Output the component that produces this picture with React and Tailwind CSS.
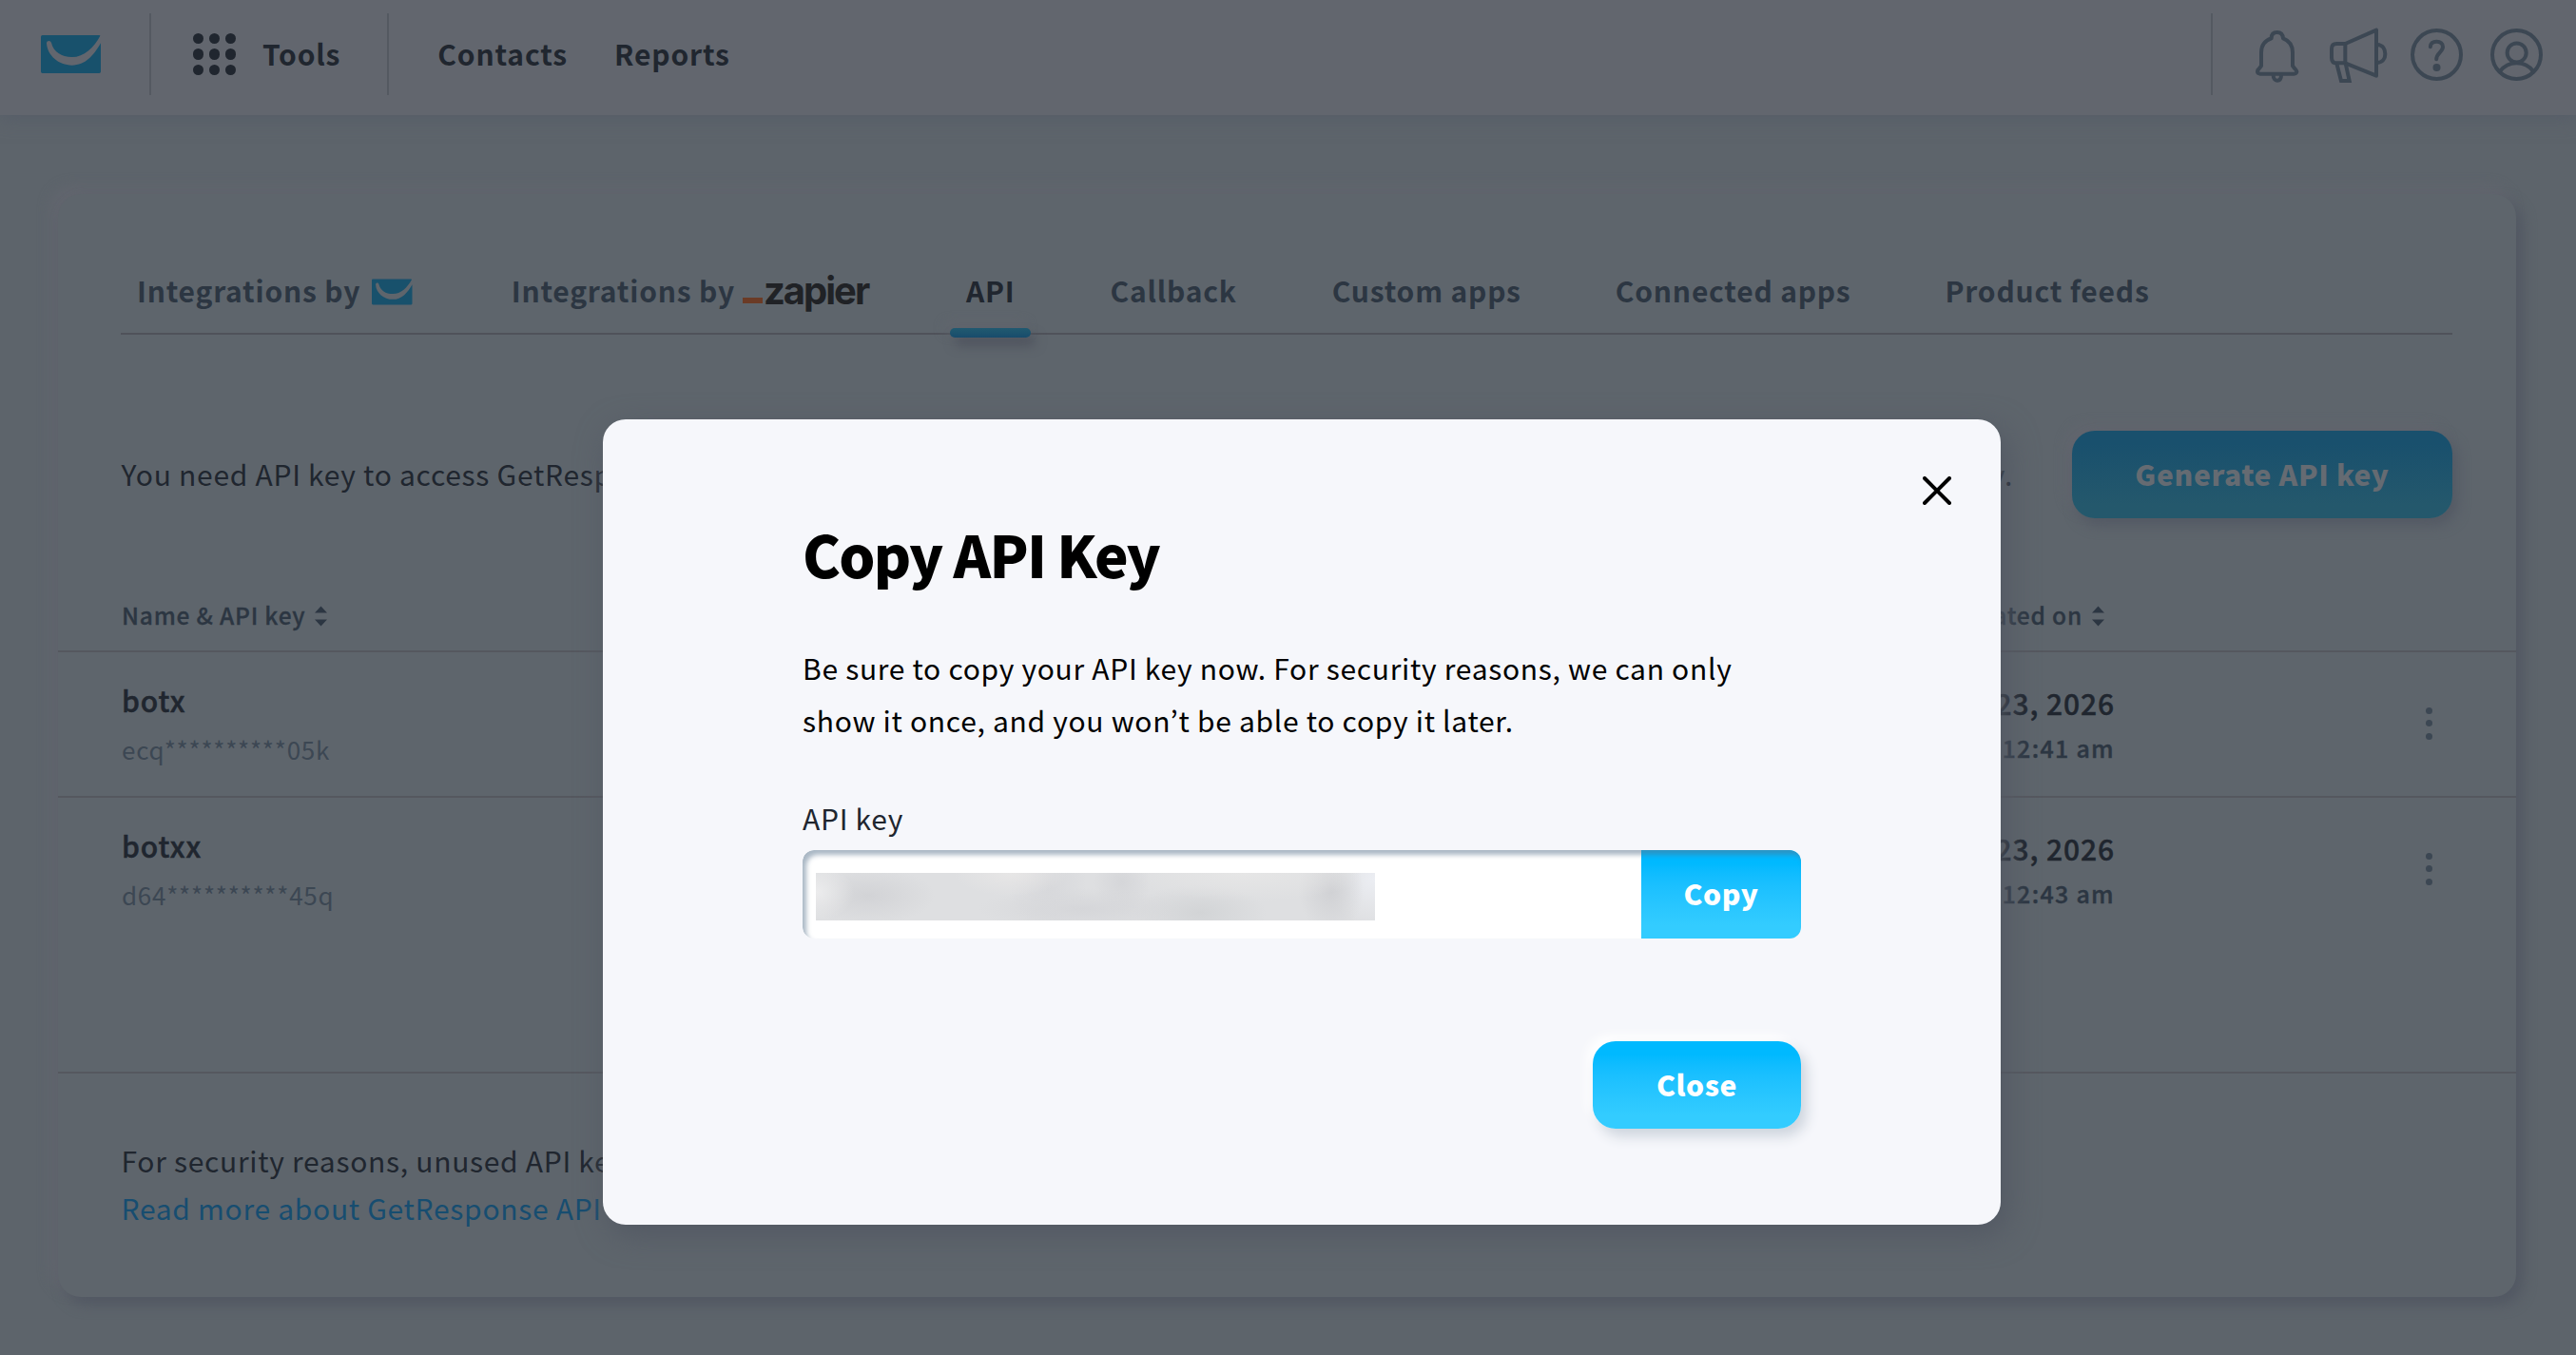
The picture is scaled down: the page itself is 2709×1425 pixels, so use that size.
const ROWS = [
  { name: "botx", key: "ecq**********05k", date: "Jan 23, 2026", time: "12:41 am" },
  { name: "botxx", key: "d64**********45q", date: "Jan 23, 2026", time: "12:43 am" },
];

function Logo({ className }) {
  return (
    <svg viewBox="39 51 189 120" className={className}>
      <path
        fill="#18516c"
        d="M44 51 H223 Q226 51 226 53 C206 90 175 120 137 120 C104 120 79 104 72 75 C70 66 57 67 57 76 C59 115 95 146 137 146 C180 146 205 115 228 76 V166 Q228 171 223 171 H44 Q39 171 39 166 V56 Q39 51 44 51 Z"
      />
    </svg>
  );
}

function HeaderDivider({ className }) {
  return <div className={`h-[86px] w-0.5 shrink-0 bg-[#545961] ${className}`} />;
}

function BellIcon() {
  return (
    <svg viewBox="63 42 144 180" className="h-[60px] w-12" fill="none" stroke="#3c4753" strokeWidth="12" strokeLinejoin="round">
      <path d="M81 188 Q72 187 72 181 Q72 176 76 173 L84 163 V121 C84 97 97 82 116 76 C116 64 122 57 134 57 C146 57 152 64 153 76 C172 83 183 97 183 121 V163 L191 173 Q196 178 196 181 Q195 188 187 188 Z" />
      <path d="M122 192 C122 204 128 209 134 209 C141 209 147 204 147 192" />
    </svg>
  );
}

function MegaphoneIcon() {
  return (
    <svg viewBox="297 36 189 183" className="h-[61px] w-[63px]" fill="none" stroke="#3c4753" strokeWidth="12" strokeLinejoin="round">
      <path d="M349 90 H322 Q306 90 306 106 V134 Q306 151 322 151 H349 Z" />
      <path d="M349 90 L447 47 V191 L349 151" />
      <path d="M450 93 C468 94 475 108 475 122 C475 137 467 149 450 150" />
      <path d="M322 152 L336 207 H362 L350 152" strokeLinejoin="miter" />
    </svg>
  );
}

function HelpIcon() {
  return (
    <svg viewBox="555.5 45 165 165" className="size-[55px]" fill="none" stroke="#3c4753" strokeWidth="12">
      <circle cx="638" cy="127.5" r="76.5" />
      <path d="M618 103 C618 92 626 86 637.500 86 C650 86 657.500 93 657.500 103 C657.500 119 637 122 637 142" strokeLinecap="round" />
      <circle cx="638" cy="168" r="12" fill="#3c4753" stroke="none" />
    </svg>
  );
}

function UserIcon() {
  return (
    <svg viewBox="807 45 165 165" className="size-[55px]" fill="none" stroke="#3c4753" strokeWidth="12">
      <circle cx="889.5" cy="127.5" r="76.5" />
      <circle cx="890" cy="121.500" r="30" />
      <path d="M837 180 C850 163 868 153.500 889.500 153.500 C912 153.500 930 163 942 180" />
    </svg>
  );
}

function SortIcon({ className }) {
  return (
    <svg viewBox="0 0 13 22" className={`h-[22px] w-[13px] ${className}`} fill="#2c3642">
      <path d="M6.500 0.500 L13 7.500 H0 Z M6.500 21.500 L13 14.500 H0 Z" />
    </svg>
  );
}

function Header() {
  return (
    <header className="relative h-[121px] bg-[#62666e] shadow-[0_3px_18px_#565d68]">
      <div className="flex h-[114px] items-center text-[30px] font-bold tracking-[0.85px] text-[#20262f]">
        <Logo className="ml-[43px] h-10 w-[63px]" />
        <HeaderDivider className="ml-[51px]" />
        <div className="ml-11 grid grid-cols-3 gap-[5.5px]">
          {Array.from({ length: 9 }, (_, i) => (
            <i key={i} className="size-[11.3px] rounded-full bg-[#20262f]" />
          ))}
        </div>
        <span className="-mt-0.5 ml-7">Tools</span>
        <HeaderDivider className="ml-[49px]" />
        <span className="-mt-0.5 ml-[51px]">Contacts</span>
        <span className="-mt-0.5 ml-[49px]">Reports</span>
        <HeaderDivider className="mr-[44.5px] ml-auto" />
        <div className="mr-[35px] flex items-center">
          <div className="mt-[4px] mr-[30px]"><BellIcon /></div>
          <div className="mt-0.5 mr-[23px]"><MegaphoneIcon /></div>
          <div className="mr-[29px]"><HelpIcon /></div>
          <UserIcon />
        </div>
      </div>
    </header>
  );
}

function Tab({ children, active, className = "" }) {
  return (
    <div className={`relative flex h-[67px] px-[17px] leading-[44px] ${active ? "text-[#20262f]" : ""} ${className}`}>
      {children}
      {active && (
        <div className="absolute inset-x-0 -bottom-[5px] h-2.5 rounded-[5px] bg-linear-to-b from-[#215a70] to-[#184c6c] shadow-[5px_8px_12px_#4d515c,-5px_-5px_12px_#62666e]" />
      )}
    </div>
  );
}

function Tabs() {
  return (
    <nav className="mr-[67px] ml-[66px] flex gap-[65px] border-b-2 border-[#4f525a] pt-[79px] text-[30px] font-bold tracking-[0.8px] whitespace-nowrap text-[#2c3642]">
      <Tab>
        Integrations by
        <Logo className="mt-2.5 mr-[5px] ml-3 h-7 w-[42.5px]" />
      </Tab>
      <Tab>
        Integrations by
        <span className="mt-[30px] ml-2 h-[5.5px] w-[21px] bg-[#6b3b26]" />
        <span className="mt-px w-[115px] pl-px font-['Inter',sans-serif] text-[40px] font-bold tracking-[-2px] text-[#202226]">zapier</span>
      </Tab>
      <Tab active>API</Tab>
      <Tab className="ml-px">Callback</Tab>
      <Tab className="ml-px">Custom apps</Tab>
      <Tab>Connected apps</Tab>
      <Tab>Product feeds</Tab>
    </nav>
  );
}

function Kebab() {
  return (
    <div className="flex flex-col gap-[6.4px]">
      <i className="size-[7px] rounded-full bg-[#3c4753]" />
      <i className="size-[7px] rounded-full bg-[#3c4753]" />
      <i className="size-[7px] rounded-full bg-[#3c4753]" />
    </div>
  );
}

function KeyRow({ row }) {
  return (
    <div className="flex h-[151px] justify-between pl-[67px]">
      <div className="pt-6 leading-[52px]">
        <div className="text-[30px] font-medium tracking-[0.9px] text-[#20262f] [-webkit-text-stroke:0.5px]">{row.name}</div>
        <div className="text-[26px] tracking-[0.75px] text-[#3c4753]">{row.key}</div>
      </div>
      <div className="flex">
        <div className="pt-[30px] text-right leading-[47px] font-medium [-webkit-text-stroke:0.4px]">
          <div className="text-[30px] tracking-[0.9px] text-[#20262f]">{row.date}</div>
          <div className="text-[25px] tracking-[1.3px] text-[#2c3642]">{row.time}</div>
        </div>
        <div className="flex w-[422px] justify-end pt-[58px] pr-[88.5px]">
          <Kebab />
        </div>
      </div>
    </div>
  );
}

function ApiCard() {
  return (
    <main className="mt-[83px] mr-[63px] ml-[61px] h-[1160px] rounded-3xl bg-[#5e656c] shadow-[7px_8px_14px_#525863,-7px_-7px_14px_#63666f]">
      <Tabs />
      <div className="mr-[67px] ml-[66.500px] mt-[101px] flex h-[92px] items-center text-[30px]">
        <span className="-mt-[2px] tracking-[0.72px] text-[#20262f]">You need API key to access GetResponse</span>
        <span className="-mt-[2px] mr-[62px] ml-auto tracking-[0.72px] text-[#20262f]">regularly.</span>
        <button className="h-full w-[400px] rounded-3xl bg-linear-to-b from-[#19506d] from-15% to-[#24586c] to-85% pb-[2px] font-black tracking-[0.65px] text-[#656b72] shadow-[5px_7px_14px_#535964,-6px_-6px_12px_#63666f]">
          Generate API key
        </button>
      </div>
      <div className="flex h-[141px] border-b-2 border-[#55585f] pt-[84px] pl-[67px] text-[24.5px] leading-9 font-medium tracking-[0.8px] text-[#2c3642] [-webkit-text-stroke:0.3px]">
        <span>Name &amp; API key</span>
        <SortIcon className="mt-[7.5px] ml-2.5" />
        <span className="ml-auto">Created on</span>
        <SortIcon className="mt-[7.5px] mr-[433px] ml-2.5" />
      </div>
      <KeyRow row={ROWS[0]} />
      <div className="h-0.5 bg-[#55585f]" />
      <div className="h-[290px] border-b-2 border-[#55585f]">
        <KeyRow row={ROWS[1]} />
      </div>
      <div className="px-[66.500px] pt-[66px] text-[30px] leading-[50px] tracking-[0.7px] text-[#20262f]">
        <p>For security reasons, unused API keys</p>
        <a className="block text-[#174d70]">Read more about GetResponse API</a>
      </div>
    </main>
  );
}

function CopyKeyModal() {
  return (
    <div role="dialog" className="absolute top-[441px] left-[634px] flex h-[847px] w-[1470px] flex-col rounded-3xl bg-[#f6f7fb] px-[210px] pt-[101px] text-black shadow-[6px_10px_32px_#525863]">
      <svg viewBox="0 0 30 30" className="absolute top-[60px] right-[52px] size-[30px]" stroke="#000" strokeWidth="4" strokeLinecap="round">
        <path d="M2 2 L28 28 M28 2 L2 28" />
      </svg>
      <h2 className="text-[60px] leading-[80px] font-black tracking-[-1.7px]">Copy API Key</h2>
      <p className="mt-[53px] w-[1000px] text-[30px] leading-[55px] tracking-[0.7px]">
        Be sure to copy your API key now. For security reasons, we can only show it once, and you won’t be able to copy it later.
      </p>
      <label className="mt-[52.500px] text-[30px] leading-[44px] tracking-[0.72px] text-[#20262f]">API key</label>
      <div className="relative mt-3 flex h-[93px] shrink-0 items-center overflow-hidden rounded-xl bg-white">
        <div className="mt-[5px] ml-3.5 h-[50px] w-[588px] bg-[#dedfe1] bg-[radial-gradient(40px_30px_at_0px_20px,#ececed,transparent),radial-gradient(70px_30px_at_55px_24px,#d2d3d6,transparent),radial-gradient(60px_24px_at_205px_0px,#e7e6e6,transparent),radial-gradient(40px_60px_at_245px_12px,#d7d8db,transparent),radial-gradient(110px_22px_at_280px_38px,#d5d6d9,transparent),radial-gradient(30px_34px_at_322px_10px,#d5d6d9,transparent),radial-gradient(130px_30px_at_450px_0px,#e6e6e6,transparent),radial-gradient(70px_30px_at_404px_42px,#d2d4d6,transparent),radial-gradient(34px_46px_at_542px_18px,#d0d1d4,transparent),radial-gradient(50px_50px_at_588px_6px,#eceef3,transparent)]" />
        <button className="ml-auto h-full w-[168px] bg-linear-to-b from-[#00b9ff] from-15% to-[#33ccff] to-85% pb-[2px] text-[30px] font-black tracking-[0.6px] text-white">
          Copy
        </button>
        <div className="pointer-events-none absolute inset-0 rounded-xl shadow-[inset_4px_5px_5px_rgba(85,114,139,0.5)]" />
      </div>
      <button className="mt-[108px] ml-auto h-[92px] w-[219px] shrink-0 rounded-3xl bg-linear-to-b from-[#00b9ff] from-15% to-[#33ccff] to-85% pb-px text-[30px] font-black tracking-[0.6px] text-white shadow-[6px_8px_14px_#cdd4dd,-6px_-6px_12px_#ffffff]">
        Close
      </button>
    </div>
  );
}

export default function App() {
  return (
    <div className="relative h-[1425px] w-[2709px] overflow-hidden bg-[#5d646b] font-['Noto_Sans_CJK_KR',sans-serif]">
      <Header />
      <ApiCard />
      <CopyKeyModal />
    </div>
  );
}
